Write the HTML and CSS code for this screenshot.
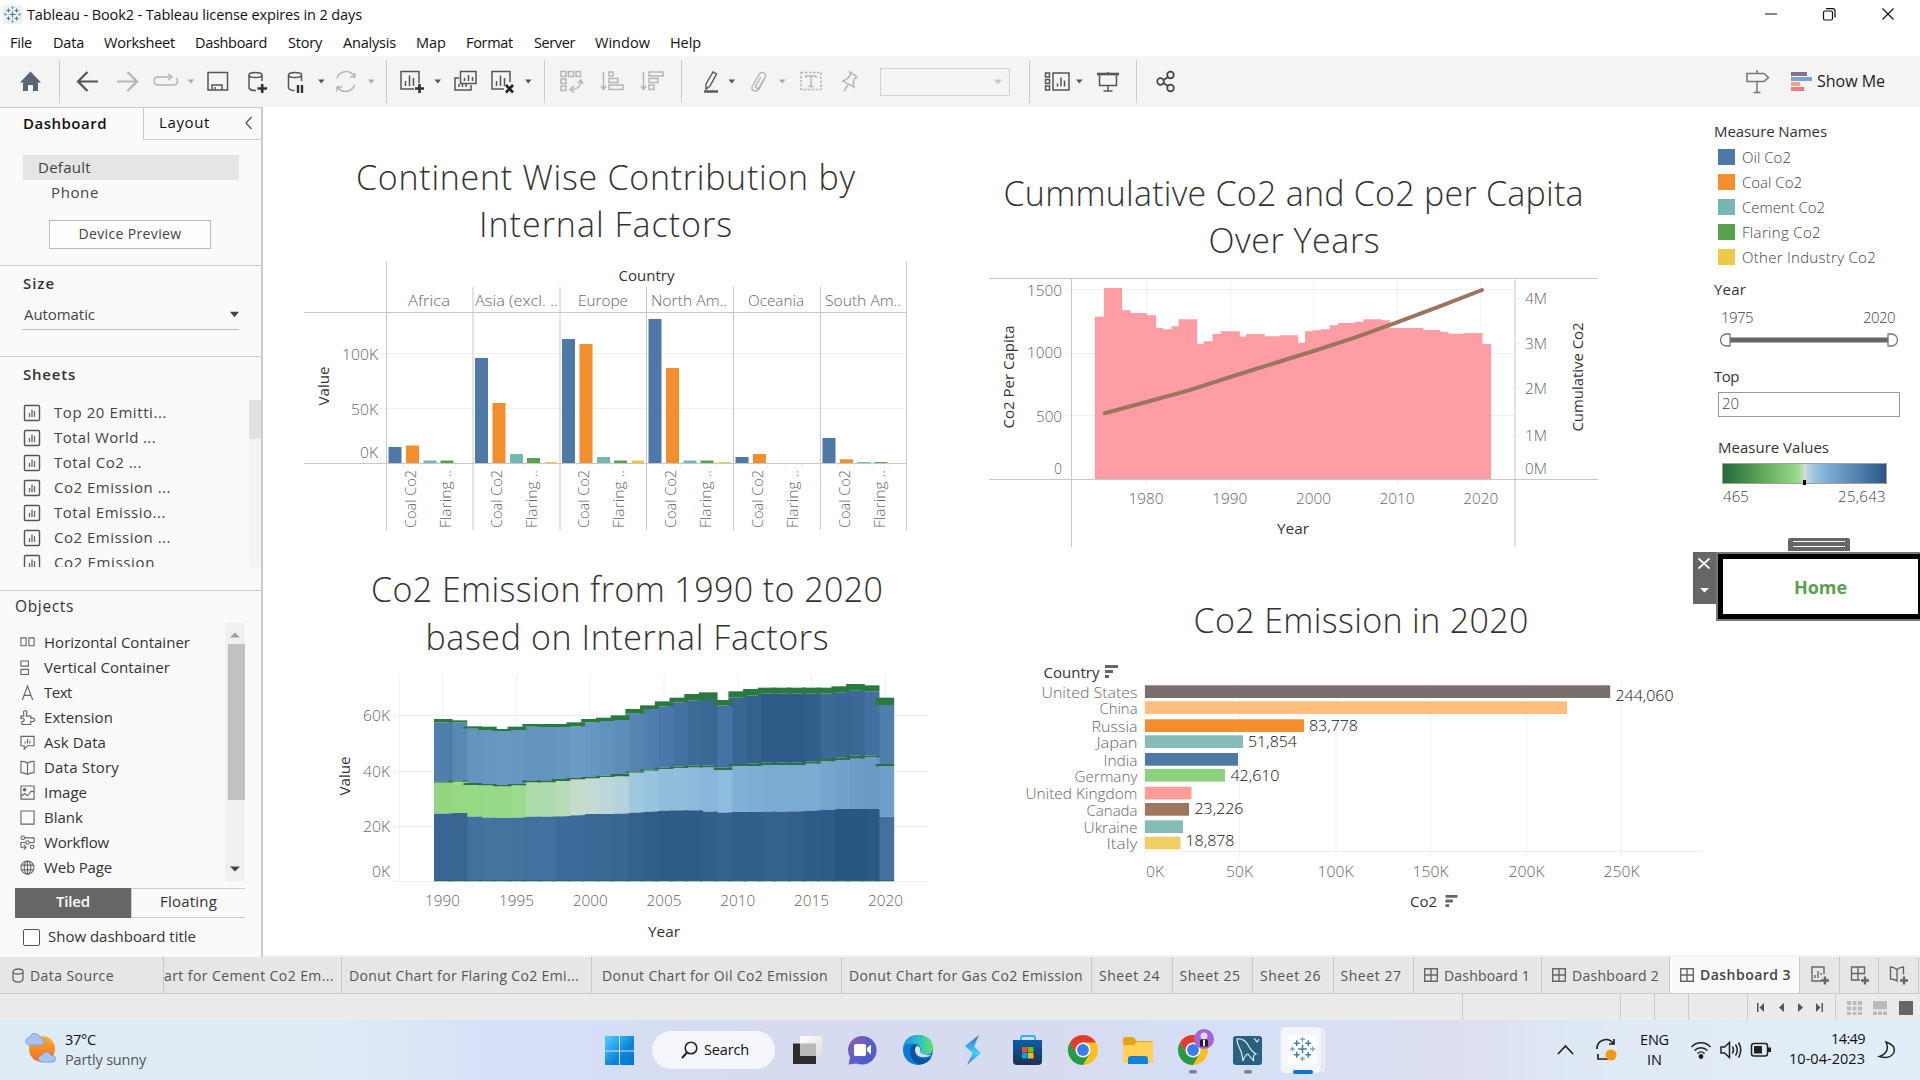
FILE: index.html
```html
<!DOCTYPE html>
<html lang="en">
<head>
<meta charset="utf-8">
<title>Tableau - Book2</title>
<link rel="stylesheet" href="styles.css">
</head>
<body>
<svg class="defs" aria-hidden="true">
  <defs>
    <symbol id="sheet" viewBox="0 0 18 18"><rect x="1.5" y="1.5" width="15" height="15" rx="1" fill="none" stroke="#555" stroke-width="1.4"/><path d="M6.5 13V9M9 13V5.500M11.500 13V7" stroke="#666" stroke-width="1.300"/></symbol>
    <symbol id="dash" viewBox="0 0 14 14"><path d="M.7.7h12.600v12.600H.7zM7 .7v12.600M.7 7h12.600" fill="none" stroke="#666" stroke-width="1.400"/></symbol>
    <symbol id="caret" viewBox="0 0 8 6"><path d="M0 .5h8L4 5.500z" fill="currentColor"/></symbol>
    <symbol id="sortmark" viewBox="0 0 13 13"><path d="M0 0h13v3H0zM0 5h8v3H0zM0 10h4v3H0z" fill="#666"/></symbol>
    <symbol id="tableau" viewBox="0 0 28 28"><path d="M14 9.500v9M9.500 14h9" stroke="#3f7cac" stroke-width="1.600"/><path d="M8 5v6M5 8h6M20 5v6M17 8h6M8 17v6M5 20h6M20 17v6M17 20h6" stroke="#3f7cac" stroke-width="1.500"/><path d="M14 1.500v5M11.500 4h5M14 21.500v5M11.500 24h5M1 14h5M3.500 11.500v5M22 14h5M24.500 11.500v5" stroke="#6ba6cf" stroke-width="1.300"/></symbol>
    <linearGradient id="win" gradientUnits="userSpaceOnUse" x1="605" y1="1036" x2="634" y2="1065"><stop offset="0" stop-color="#55d0ff"/><stop offset=".6" stop-color="#0b84dc"/><stop offset="1" stop-color="#0078d4"/></linearGradient>
    <linearGradient id="edge" x1="0" y1="0" x2="1" y2="0"><stop offset="0" stop-color="#1b8fe0"/><stop offset=".5" stop-color="#2cc0cf"/><stop offset="1" stop-color="#5fe35f"/></linearGradient>
    <linearGradient id="chat" x1="0" y1="0" x2="1" y2="1"><stop offset="0" stop-color="#9a5ca8"/><stop offset=".5" stop-color="#5b5fc7"/><stop offset="1" stop-color="#4b57c9"/></linearGradient>
    <linearGradient id="bolt" x1="0" y1="0" x2="0" y2="1"><stop offset="0" stop-color="#2d6fe8"/><stop offset=".6" stop-color="#45d0f5"/><stop offset="1" stop-color="#3a7fe8"/></linearGradient>
    <linearGradient id="store" x1="0" y1="0" x2="0" y2="1"><stop offset="0" stop-color="#0a5ea8"/><stop offset="1" stop-color="#20304f"/></linearGradient>
    <linearGradient id="glass" x1="0" y1="0" x2="1" y2="1"><stop offset="0" stop-color="#fff"/><stop offset="1" stop-color="#dedede"/></linearGradient>
    <linearGradient id="sun" x1="0" y1="0" x2="0" y2="1"><stop offset="0" stop-color="#fbb034"/><stop offset="1" stop-color="#f26a1b"/></linearGradient>
    <g id="chrome"><circle r="15" fill="#fbc11b"/><path d="M-13-7.500A15 15 0 0 0 0 15L6.500 3.750H-6.500z" fill="#269a48"/><path d="M0-7.500H13A15 15 0 0 0-13-7.500L-6.500 3.750z" fill="#e33b2e"/><circle r="7.500" fill="#fff"/><circle r="5.900" fill="#3a7df0"/></g>
  </defs>
</svg>
<div class="app">
  <header class="titlebar">
    <svg class="applogo" viewBox="0 0 28 28"><use href="#tableau"/></svg>
    <span class="seg" data-w="335">Tableau - Book2 - Tableau license expires in 2 days</span>
    <svg class="winbtns" width="150" height="28" viewBox="1758 0 150 28" fill="none" stroke="#111" stroke-width="1.200"><path d="M1765 14h12M1882.500 8.500l11 11M1893.500 8.500l-11 11"/><rect x="1823.500" y="11" width="9" height="9" rx="1.500"/><path d="M1826 8.600h6.500q2.500 0 2.500 2.500v6.400"/></svg>
  </header>
  <nav class="menubar seg"><span data-w="22">File</span><span data-w="31">Data</span><span data-w="71">Worksheet</span><span data-w="72">Dashboard</span><span data-w="34">Story</span><span data-w="53">Analysis</span><span data-w="30">Map</span><span data-w="47">Format</span><span data-w="41">Server</span><span data-w="55">Window</span><span data-w="31">Help</span></nav>
  <div class="toolbar">
    <svg width="59" height="51" viewBox="0 56 59 51"><path d="M20 82.500L30.500 71.500l10.500 11h-3v8.500h-5v-6h-5v6h-5v-8.500z" fill="#5b6573"/></svg>
    <i></i>
    <svg width="326" height="51" viewBox="60 56 326 51" fill="none" stroke="#555" stroke-width="1.500">
      <path d="M98 81.500H79M87.500 72l-9.500 9.500 9.500 9.500" stroke-width="2.200"/>
      <g stroke="#b5b5b5"><path d="M117 81.500h19M127.500 72l9.500 9.500-9.500 9.500" stroke-width="2.200"/><path d="M170 77h-12q-4 0-4 4t4 4h15q4.500 0 4.500-4 0-2-1.500-3M168 74l4 3-4 3"/><path d="M337 78a9.500 9.500 0 0 1 17-2M354.500 85a9.500 9.500 0 0 1-17 2M355 73v4h-5M337 91v-4h5"/></g>
      <path d="M208 72.500h19.500V90H208zM212 90v-5h10v5M215 90v-3"/>
      <path d="M249 75v13q2 3 7 2.500M262 75v6M249 75a6.500 2.500 0 1 0 13 0 6.500 2.500 0 1 0-13 0"/><path d="M257.500 88.500h9.500M262.200 84v9" stroke="#333" stroke-width="2.600"/>
      <path d="M288.500 75v13q1 2.500 6 2.500M301.500 75v6M288.500 75a6.500 2.500 0 1 0 13 0 6.500 2.500 0 1 0-13 0"/><path d="M298 85v8M302 85v8" stroke="#333" stroke-width="2.400"/>
      <g stroke="none"><path d="M187.500 79.500h6.500l-3.250 4z" fill="#aaa"/><path d="M318 79.500h6.500l-3.250 4z" fill="#555"/><path d="M368 79.500h6.500l-3.250 4z" fill="#aaa"/></g>
    </svg>
    <i></i>
    <svg width="157" height="51" viewBox="387 56 157 51" fill="none" stroke="#555" stroke-width="1.500">
      <path d="M419 83V71.500h-18V89h13M405.500 86v-5M409.500 86V75.500M413.500 86v-8"/><path d="M415 88.500h9M419.500 84v9" stroke="#333" stroke-width="2.600"/>
      <path d="M460.500 71.500h15.500v12h-15.500zM459 78h-4v12h16v-5M464.500 81v-3M468.500 81v-6M472.500 81v-4M459 87v-3M462.500 87v-3M466 87v-3"/>
      <path d="M510 82V71.500h-18V89h12M496.500 86v-5M500.500 86V75.500M504.500 86v-8"/><path d="M506 85l7 7.500M513 85l-7 7.500" stroke="#222" stroke-width="2.600"/>
      <g stroke="none" fill="#555"><path d="M434.500 79.500h6.500l-3.250 4z"/><path d="M525 79.500h6.500l-3.250 4z"/></g>
    </svg>
    <i></i>
    <svg width="136" height="51" viewBox="545 56 136 51" fill="none" stroke="#b5b5b5" stroke-width="1.500">
      <path d="M561 71.500h5v5h-5zM568.500 71.500h5v5h-5zM576 71.500h4.500v5H576zM561 79h5v4.500h-5zM561 86h5v4.500h-5zM571 89.500q9 0 10-8M577.500 83l3.500-3 2 4M574 86l-4 3.500 4 3"/>
      <path d="M603.500 72v17M601 86l2.500 3.500L606 86M609 72h4v4h-4zM609 78.500h9v4h-9zM609 85h14v4.500h-14z"/>
      <path d="M643.500 72v17M641 86l2.500 3.500L646 86M649 72h14v4h-14zM649 78.500h9v4h-9zM649 85h5v4.500h-5z"/>
    </svg>
    <i></i>
    <svg width="198" height="51" viewBox="682 56 198 51" fill="none" stroke="#b5b5b5" stroke-width="1.400">
      <path d="M706 84l7-12 3.500 2L710 86l-4 3z" stroke="#555"/><path d="M704 91.500h14" stroke="#555" stroke-width="2.400"/>
      <path d="M765 78l-6 11q-2.500 3-5.500 1.500T753 85l6.500-11q2-2.500 4.500-1t1 4.500l-6 10q-1 1.500-2.500.5t-.5-2.500l5-8.500"/>
      <path d="M801 72.500h20v17h-20z" stroke-dasharray="2.500 1.500"/><path d="M806 78v-2h10v2M811 76v10.500M808.500 86.500h5"/>
      <path d="M850 72l7 5-2 1-2 5 1 4-11-6 4-2 3.500-4zM848 85l-4 6"/>
      <g stroke="none"><path d="M728.500 79.500h6.500l-3.250 4z" fill="#555"/><path d="M779 79.500h6.500l-3.250 4z" fill="#aaa"/></g>
    </svg>
    <span class="combo"><svg width="8" height="6"><use href="#caret"/></svg></span>
    <i class="wide"></i>
    <svg width="106" height="51" viewBox="1030 56 106 51" fill="none" stroke="#555" stroke-width="1.500">
      <path d="M1045.500 73h4v4h-4zM1045.500 79.500h4v4h-4zM1045.500 86h4v4h-4zM1053 73h16v17h-16zM1057.500 86.500v-3M1061 86.500v-9M1064.500 86.500v-6"/><path d="M1076 79.500h6.500l-3.250 4z" fill="#555" stroke="none"/>
      <path d="M1097 74h22" stroke-width="2.600"/><path d="M1099.500 75v10.500h17V75M1108 72v2M1108 86v5M1103.500 91h9"/>
    </svg>
    <i></i>
    <svg width="60" height="51" viewBox="1137 56 60 51" fill="none" stroke="#444" stroke-width="1.700"><circle cx="1160.500" cy="81.500" r="3.300"/><circle cx="1170.500" cy="75" r="3.300"/><circle cx="1170.500" cy="88" r="3.300"/><path d="M1163.500 80l4.500-3M1163.500 83l4.500 3"/></svg>
    <div class="right">
      <svg width="72" height="51" viewBox="1741 56 72 51"><path d="M1746 73.500h17l4.500 4-4.500 4h-17zM1756 70v3M1756 82v10.500M1752.500 92.500h7" fill="none" stroke="#777" stroke-width="1.500"/><path d="M1790 72h16v4h-16z" fill="#8a6b9b"/><path d="M1790 77h21v4h-21z" fill="#7ba3cf"/><path d="M1790 82h9v4h-9z" fill="#f0a57c"/><path d="M1790 87h13v4h-13z" fill="#f77582"/></svg>
      <span data-w="68">Show Me</span>
    </div>
  </div>
  <main class="body">
    <aside class="side">
      <div class="sidetabs"><b data-w="84">Dashboard</b><span class="laytab"><span data-w="51">Layout</span><svg width="9" height="14" viewBox="0 0 9 14"><path d="M7.500 1L2 7l5.500 6" fill="none" stroke="#555" stroke-width="1.300"/></svg></span></div>
      <section class="devices">
        <div class="default"><span data-w="53">Default</span></div>
        <div class="phone"><span data-w="48">Phone</span></div>
        <div class="preview"><span data-w="103">Device Preview</span></div>
      </section>
      <section class="size"><b data-w="32">Size</b><div class="select"><span data-w="71">Automatic</span><svg width="9" height="7"><use href="#caret"/></svg></div></section>
      <section class="sheets"><b data-w="53">Sheets</b>
        <div class="sheetbox"><ul>
          <li><svg><use href="#sheet"/></svg><span data-w="113">Top 20 Emitti...</span></li>
          <li><svg><use href="#sheet"/></svg><span data-w="102">Total World ...</span></li>
          <li><svg><use href="#sheet"/></svg><span data-w="88">Total Co2 ...</span></li>
          <li><svg><use href="#sheet"/></svg><span data-w="117">Co2 Emission ...</span></li>
          <li><svg><use href="#sheet"/></svg><span data-w="112">Total Emissio...</span></li>
          <li><svg><use href="#sheet"/></svg><span data-w="117">Co2 Emission ...</span></li>
          <li><svg><use href="#sheet"/></svg><span data-w="101">Co2 Emission</span></li>
        </ul><div class="scroll"><div></div></div></div>
      </section>
      <section class="objects"><h4 data-w="59">Objects</h4>
        <div class="objbox"><ul>
          <li><svg viewBox="0 0 16 16"><path d="M1 3h5.500v8.500H1zM9.500 3H15v8.500H9.500z"/></svg><span data-w="146">Horizontal Container</span></li>
          <li><svg viewBox="0 0 16 16"><path d="M1 1h8v5.500H1zM1 10h8v5.500H1z"/></svg><span data-w="126">Vertical Container</span></li>
          <li><svg viewBox="0 0 16 16"><path d="M2.500 16L8 1l5.500 15M4.500 11h7"/></svg><span data-w="28">Text</span></li>
          <li><svg viewBox="0 0 16 16"><path d="M1 6.500h3V4q-1-3 1.500-3.200T7 4v2.500h4.500v2.500q4-1 4 1.500t-4 1.500v3.500H2V12.500q2.500 0 2.500-2T1 9z"/></svg><span data-w="69">Extension</span></li>
          <li><svg viewBox="0 0 16 16"><path d="M1 1.500h14v10H8L4.500 15v-3.500H1zM5.500 9V7M8 9V4M10.500 9V6"/></svg><span data-w="62">Ask Data</span></li>
          <li><svg viewBox="0 0 16 16"><path d="M8 3.500Q5 1 1 1.500V13.500q4 0 7 2 3-2 7-2V1.500Q11 1 8 3.500v12"/></svg><span data-w="75">Data Story</span></li>
          <li><svg viewBox="0 0 16 16"><path d="M1 1h14v14H1zM1 12l4-3 3 2.500 4-5 3 1"/><circle cx="5" cy="5" r="1.300" fill="#666"/></svg><span data-w="43">Image</span></li>
          <li><svg viewBox="0 0 16 16"><path d="M1 1h14v14H1z"/></svg><span data-w="39">Blank</span></li>
          <li><svg viewBox="0 0 16 16"><circle cx="3" cy="3" r="1.900"/><circle cx="8" cy="8" r="1.900"/><circle cx="13" cy="12.500" r="1.900"/><path d="M5 3h10v5h-5M6 8H1v5h4.500M4 10.500L6.500 13 4 15.500"/></svg><span data-w="65">Workflow</span></li>
          <li><svg viewBox="0 0 16 16"><circle cx="8" cy="8" r="7"/><ellipse cx="8" cy="8" rx="3.500" ry="7"/><path d="M1.500 5.500h13M1.500 10.500h13M8 1v14"/></svg><span data-w="68">Web Page</span></li>
        </ul><div class="scroll2"><svg width="10" height="6" viewBox="0 0 10 6"><path d="M0 5.500L5 .5l5 5z" fill="#a0a0a0"/></svg><div></div><svg width="10" height="6" viewBox="0 0 10 6"><path d="M0 .5h10L5 5.500z" fill="#444"/></svg></div></div>
        <div class="seg2"><b data-w="34">Tiled</b><span><span data-w="57">Floating</span></span></div>
        <div class="check"><i></i><span data-w="148">Show dashboard title</span></div>
      </section>
    </aside>
    <div class="canvas">
      <div class="charts">
        <svg id="c1" width="687" height="443" viewBox="263 107 687 443"></svg>
        <svg id="c2" width="740" height="443" viewBox="950 107 740 443"></svg>
        <svg id="c3" width="687" height="404" viewBox="263 550 687 404"></svg>
        <svg id="c4" width="740" height="404" viewBox="950 550 740 404"></svg>
      </div>
      <div class="legends">
        <h5 data-w="113">Measure Names</h5>
        <ul class="keys">
          <li><i class="oil"></i><span data-w="49">Oil Co2</span></li>
          <li><i class="coal"></i><span data-w="60">Coal Co2</span></li>
          <li><i class="cement"></i><span data-w="83">Cement Co2</span></li>
          <li><i class="flaring"></i><span data-w="79">Flaring Co2</span></li>
          <li><i class="other"></i><span data-w="134">Other Industry Co2</span></li>
        </ul>
        <h5 class="yr" data-w="32">Year</h5>
        <div class="range"><span data-w="32">1975</span><span data-w="32">2020</span></div>
        <svg class="slider" width="180" height="16" viewBox="0 0 180 16"><path d="M11 8h158" stroke="#666" stroke-width="5"/><path d="M11 2H7.500a6 6 0 0 0 0 12H11zM169 2h3.500a6 6 0 0 1 0 12H169z" fill="#fff" stroke="#777" stroke-width="1.300"/></svg>
        <h5 class="top" data-w="25">Top</h5>
        <div class="input"><span data-w="17">20</span></div>
        <h5 class="mv" data-w="111">Measure Values</h5>
        <div class="ramp"><i></i></div>
        <div class="ends"><span data-w="26">465</span><span data-w="48">25,643</span></div>
        <div class="grip"><i></i><i></i></div>
        <div class="zone">
          <svg width="25" height="52" viewBox="0 0 25 52"><path d="M0 0h25v52H0z" fill="#666"/><path d="M5.500 6.500l11 10M16.500 6.500l-11 10" stroke="#fff" stroke-width="1.800"/><path d="M7 36h9L11.500 40.500z" fill="#fff"/></svg>
          <div class="home"><span data-w="53">Home</span></div>
        </div>
      </div>
    </div>
  </main>
  <div class="tabs">
    <span class="ds"><svg width="12" height="15" viewBox="0 0 12 15"><path d="M1 3.500v8q1 2.500 5 2.500t5-2.500v-8M1 3.500a5 2.500 0 1 0 10 0 5 2.500 0 1 0-10 0" fill="none" stroke="#666" stroke-width="1.300"/></svg><span data-w="84">Data Source</span></span>
    <span class="cement"><span data-w="170">art for Cement Co2 Em...</span></span>
    <span class="flar"><span data-w="230">Donut Chart for Flaring Co2 Emi...</span></span>
    <span class="oilt"><span data-w="226">Donut Chart for Oil Co2 Emission</span></span>
    <span class="gas"><span data-w="234">Donut Chart for Gas Co2 Emission</span></span>
    <span class="sh"><span data-w="61">Sheet 24</span></span><span class="sh"><span data-w="61">Sheet 25</span></span><span class="sh"><span data-w="61">Sheet 26</span></span><span class="sh"><span data-w="61">Sheet 27</span></span>
    <span class="db"><svg><use href="#dash"/></svg><span data-w="86">Dashboard 1</span></span>
    <span class="db"><svg><use href="#dash"/></svg><span data-w="87">Dashboard 2</span></span>
    <span class="db on"><svg><use href="#dash"/></svg><b data-w="91">Dashboard 3</b></span>
    <span class="new"><svg viewBox="0 0 20 20"><path d="M14 9V2H2v14h9M5 13v-3M8 13V6M11 10V8"/><path class="plus" d="M11 15.500h8M15 11.500v8"/></svg></span>
    <span class="new"><svg viewBox="0 0 20 20"><path d="M14.500 9.500V2h-13v13H10M8 2v13M1.500 8.500h13"/><path class="plus" d="M11 15.500h8M15 11.500v8"/></svg></span>
    <span class="new"><svg viewBox="0 0 20 20"><path d="M8 4.500Q5 2 1.500 2v12q4 0 6.500 2V4.500Q11 2 14.500 2v7.500"/><path class="plus" d="M11 15.500h8M15 11.500v8"/></svg></span>
  </div>
  <div class="status"><svg width="460" height="26" viewBox="1460 994 460 26"><path d="M1462.500 994v26M1620.500 994v26M1654.500 994v26M1688.500 994v26M1747.500 994v26M1835.500 994v26" stroke="#ccc"/><path d="M1757 1003h1.500v9h-1.500zM1764 1003v9l-4.500-4.500zM1784 1003v9l-5-4.500zM1798 1003v9l5-4.500zM1816 1003v9l4.500-4.500zM1821.500 1003h1.500v9h-1.500z" fill="#555"/><path d="M1847 1001h4v4h-4zM1852.500 1001h4v4h-4zM1858 1001h4v4h-4zM1847 1006.500h4v4h-4zM1852.500 1006.500h4v4h-4zM1858 1006.500h4v4h-4zM1847 1012h4v3h-4zM1852.500 1012h4v3h-4zM1858 1012h4v3h-4zM1873 1001h14v8.500h-14zM1873 1011.500h4v3.500h-4zM1878 1011.500h4v3.500h-4zM1883 1011.500h4v3.500h-4z" fill="#bbb"/><path d="M1899 1001h14v14h-14z" fill="#666"/></svg></div>
  <footer class="taskbar seg">
    <svg width="38" height="60" viewBox="22 1020 38 60"><circle cx="42" cy="1049" r="13" fill="url(#sun)"/><path d="M29 1045q-4-1-3-4.500t4-3.500q1-4 5-3.500t5 4q4 0 4 4t-4 3.500zM41 1062q-3-1-2.500-4t4-3q1-3 4-3t4 3.500q5-.5 5 3.500 0 3-4 3z" fill="#a9c4ee" stroke="#7f9fd8"/></svg>
    <div class="weather"><span data-w="31">37°C</span><em data-w="81">Partly sunny</em></div>
    <svg class="start" width="30" height="60" viewBox="605 1020 30 60"><path d="M605 1036h14v14.500h-14zM620 1036h14v14.500h-14zM605 1051.500h14v13.500h-14zM620 1051.500h14v13.500h-14z" fill="url(#win)"/></svg>
    <div class="search"><svg width="18" height="18" viewBox="0 0 18 18"><circle cx="11" cy="7" r="5.800" fill="none" stroke="#222" stroke-width="1.600"/><path d="M7 11.500L2 17" stroke="#222" stroke-width="2"/></svg><span data-w="45">Search</span></div>
    <svg width="560" height="60" viewBox="780 1020 560 60">
      <path d="M793 1043.500h23v20.500h-23z" fill="#2d2d2d"/><path d="M800 1036h22.500v20h-22.500z" fill="url(#glass)"/><path d="M800 1043.500h16v12.500h-16z" fill="#b9b9b9"/>
      <path d="M848.500 1064.500l1.500-7q-2-4-2-7a14.300 14.300 0 1 1 14.300 14q-4 0-6-1z" fill="url(#chat)"/><rect x="854" y="1044" width="12" height="12" rx="1.500" fill="#fff"/><path d="M867 1048l4-3.500v10l-4-3.500z" fill="#fff"/>
      <circle cx="918" cy="1050" r="15" fill="#0f7ad4"/><path d="M903.200 1047.500Q905 1035 918 1035q14.500.5 15 13 0 7-8 7-5 0-4.500-3.500 1.500-7.500-6.500-8-7-.5-10.800 4z" fill="url(#edge)"/><path d="M911 1047q-3 14 9 17.500 8-1 11.500-7.500-6 3-11.500 1-5.500-2.500-5-9 1-3 3-4-5-2-7 2z" fill="#0f52a0"/><path d="M917 1045.500q-4 4 0 9.500 6 4.500 14.500 0-11 1-11.500-4.500 1-3-3-5z" fill="#d8e0f6"/>
      <path d="M979 1035l-14 11 7.500 7-5.500 12 14-12-7-6.500z" fill="url(#bolt)"/>
      <path d="M1021 1041v-3q0-2 2-2h10q2 0 2 2v3" fill="none" stroke="#2ab4ea" stroke-width="1.800"/><path d="M1013 1040h29v21q0 4-4 4h-21q-4 0-4-4z" fill="url(#store)"/><path d="M1022 1047h5.500v5.500h-5.500z" fill="#f25022"/><path d="M1028 1047h5.500v5.500h-5.500z" fill="#7fba00"/><path d="M1022 1053h5.500v5.500h-5.500z" fill="#00a4ef"/><path d="M1028 1053h5.500v5.500h-5.500z" fill="#ffb900"/>
      <use href="#chrome" x="1083" y="1050"/>
      <path d="M1123 1039q0-2 2-2h8l4 4h14q2 0 2 2v18q0 2-2 2h-26q-2 0-2-2z" fill="#e8a317"/><path d="M1123 1045h11l3-3h16v19q0 2-2 2h-26q-2 0-2-2z" fill="#ffd257"/><path d="M1128 1064v-5q0-3 3-3h14q3 0 3 3v5z" fill="#1680d8"/>
      <use href="#chrome" x="1193" y="1050"/><circle cx="1204" cy="1039" r="10" fill="#a463d8"/><path d="M1200 1046.500v-6q4-4 8 0v6z" fill="#222"/><path d="M1203 1040h2v6h-2z" fill="#eee"/><circle cx="1204" cy="1036" r="3.500" fill="#ddd"/>
      <rect x="1233" y="1036" width="29" height="29" rx="3" fill="#28627f"/><path d="M1237 1039q7-1 11 6 3 6 8 9-4 1-2 7-4-4-6-7-3 1-5 7-1-8-3-12-3-6-3-10zM1254 1038l3 4 2-3" fill="none" stroke="#dfeaf0" stroke-width="1.200"/>
      <rect x="1284" y="1026.500" width="42" height="47" rx="5" fill="#e9eef9" stroke="#d5dbe8"/><rect x="1280" y="1026.500" width="42" height="47" rx="5" fill="#f3f6fc" stroke="#d5dbe8"/><path d="M1288.500 1035h28v28.500h-28z" fill="#fff"/><use href="#tableau" x="1289" y="1035.500" width="27" height="27"/>
      <rect x="1293" y="1070" width="20" height="4" rx="2" fill="#0e72d0"/><rect x="1189" y="1070" width="8" height="3.500" rx="1.700" fill="#7c8290"/><rect x="1244" y="1070" width="8" height="3.500" rx="1.700" fill="#7c8290"/>
    </svg>
    <div class="tray">
      <svg width="76" height="60" viewBox="1550 1020 76 60" fill="none" stroke="#222" stroke-width="1.700"><path d="M1558 1054l7.500-8 7.500 8M1597 1049a9 9 0 0 1 16-6M1614 1039v5h-5M1608 1059h-9M1598 1054v5h5"/><circle cx="1611" cy="1055" r="5.500" fill="#f39a12" stroke="none"/></svg>
      <div class="lang"><span data-w="29">ENG</span><span data-w="15">IN</span></div>
      <svg width="92" height="60" viewBox="1684 1020 92 60" fill="none" stroke="#222" stroke-width="1.500"><path d="M1691.500 1047a13 13 0 0 1 19 0M1694.500 1050.500a9 9 0 0 1 13 0M1697.500 1053.500a5 5 0 0 1 7 0M1721 1047h3.500l5-4.500v15l-5-4.500h-3.500zM1732.500 1046.500q2 3.500 0 7M1735.500 1044.500q3.500 5.500 0 11M1738.500 1042.500q4.500 7.500 0 15"/><circle cx="1701" cy="1056.500" r="1.700" fill="#222"/><rect x="1751.500" y="1043.500" width="16" height="12.500" rx="2.500"/><path d="M1754 1046h8v7.500h-8zM1768 1047.500h3v4.500h-3z" fill="#222" stroke="none"/></svg>
      <div class="clock"><span data-w="34">14:49</span><span data-w="76">10-04-2023</span></div>
      <svg width="30" height="60" viewBox="1872 1020 30 60"><path d="M1886 1042q10 3 8 10.500-4 7-14.500 4 11-4 6.500-14.500z" fill="none" stroke="#222" stroke-width="1.500"/></svg>
    </div>
  </footer>
</div>
<script src="charts.js"></script>
</body>
</html>
```
FILE: styles.css
```css
* { box-sizing: border-box; }
body { margin: 0; font-family: "Open Sans", "Noto Sans", sans-serif; font-size: 15px; color: #333; background: #fff; }
ul { list-style: none; margin: 0; padding: 0; }
svg { display: block; flex: none; }
.defs { position: absolute; width: 0; height: 0; }
[data-w] { white-space: nowrap; }
.app { width: 1920px; height: 1080px; display: flex; flex-direction: column; overflow: hidden; }
.seg { font-family: "Open Sans", "Noto Sans", sans-serif; color: #111; }

.titlebar { height: 28px; display: flex; align-items: center; padding-left: 3px; font-size: 14.5px; }
.applogo { width: 19px; height: 19px; background: #eef0f2; margin-right: 5px; }
.winbtns { margin-left: auto; margin-right: 12px; }
.menubar { height: 28px; padding-left: 10px; display: grid; align-items: center; grid-template-columns: 43px 51px 91px 93px 55px 73px 50px 68px 61px 75px 60px; font-size: 14.5px; line-height: 30px; }
.menubar span { justify-self: start; }

.toolbar { height: 51px; background: #f4f4f4; display: flex; align-items: center; }
.toolbar > i { width: 1px; height: 43px; background: #ccc; }
.toolbar > i.wide { margin-left: 19px; }
.combo { width: 130px; height: 28px; border: 1px solid #d2d2d2; display: flex; align-items: center; justify-content: flex-end; padding-right: 7px; color: #c8c8c8; }
.toolbar .right { margin-left: auto; display: flex; align-items: center; gap: 3px; padding-right: 35px; color: #222; font-size: 16px; }
.toolbar .right span { padding-bottom: 2px; }

.body { height: 850px; display: flex; }
.side { width: 263px; border-right: 2px solid #ccc; border-top: 1px solid #ccc; background: #fafafa; flex: none; display: flex; flex-direction: column; }
.sidetabs { display: flex; height: 32px; padding-left: 23px; align-items: center; color: #111; line-height: 20px; }
.sidetabs b, .laytab span { padding-bottom: 2px; }
.laytab { margin-left: auto; width: 118px; height: 32px; border-left: 1px solid #ccc; border-bottom: 1px solid #ccc; padding: 0 8px 2px 15px; display: flex; align-items: center; justify-content: space-between; }
.side b { font-weight: 600; }
.devices { padding: 15px 22px 0 23px; height: 125px; color: #444; line-height: 25px; }
.default { background: #e5e5e5; height: 25px; padding-left: 15px; width: 216px; }
.phone { padding-left: 28px; height: 25px; }
.preview { margin: 15px 0 0 26px; width: 162px; height: 29px; line-height: 25px; border: 1px solid #bbb; background: #fdfdfd; text-align: center; font-size: 14px; }
.size { border-top: 1px solid #ccc; height: 91px; padding: 7px 0 0 23px; }
.size b, .sheets b { line-height: 21px; display: inline-block; }
.select { width: 216px; height: 29px; margin-top: 7px; padding: 0 0 2px 1px; border-bottom: 1px solid #bbb; display: flex; align-items: center; justify-content: space-between; color: #444; }
.sheets { border-top: 1px solid #ccc; height: 234px; padding: 7px 0 0 23px; }
.sheetbox { margin-top: 15px; height: 167px; overflow: hidden; display: flex; justify-content: space-between; }
.sheets li { display: flex; align-items: center; height: 25px; gap: 13px; color: #444; line-height: 20px; }
.sheets li span { padding-bottom: 1px; }
.sheets li svg { width: 18px; height: 18px; }
.scroll { width: 12px; background: #f3f3f3; }
.scroll div { height: 39px; background: #e0e0e0; }
.objects { border-top: 1px solid #ccc; padding: 3px 0 0 15px; flex: 1; }
.objects h4 { margin: 0; font-weight: 500; font-size: 15.5px; line-height: 24px; width: max-content; }
.objbox { display: flex; justify-content: space-between; width: 230px; margin-top: 5px; height: 258px; }
.objbox ul { padding: 7px 0 0 5px; }
.objbox li { display: flex; align-items: center; height: 25px; gap: 9px; line-height: 20px; }
.objbox li span { padding-bottom: 2px; }
.objbox li svg { width: 15px; height: 15px; fill: none; stroke: #666; stroke-width: 1.2; }
.scroll2 { width: 20px; background: #f0f0f0; display: flex; flex-direction: column; align-items: center; padding: 9px 0; }
.scroll2 div { width: 17px; height: 156px; background: #c1c1c1; margin: 6px 0 auto 3px; }
.seg2 { display: grid; grid-template-columns: 116px 114px; height: 30px; line-height: 26px; text-align: center; margin-top: 7px; }
.seg2 b { background: #666; color: #fff; }
.seg2 > span { border: 1px solid #ccc; border-right: 0; line-height: 24px; }
.check { display: flex; gap: 8px; align-items: center; height: 17px; margin: 11px 0 0 8px; line-height: 20px; }
.check span { padding-bottom: 3px; }
.check i { width: 17px; height: 17px; border: 1px solid #555; border-radius: 2px; background: #fff; }

.canvas { flex: 1; display: flex; border-bottom: 2px solid #f3f3f3; }
.charts { display: grid; grid-template-columns: 687px 740px; grid-template-rows: 443px 404px; flex: none; width: 1427px; margin-right: -2px; }
.charts svg { overflow: visible; }
.charts text { font-family: "Open Sans", "Noto Sans", sans-serif; font-size: 15px; font-weight: 350; fill: #666; }
.charts .title { font-size: 34px; font-weight: 320; fill: #333; }
.charts .axis { fill: #333; font-weight: 400; }
.charts .val { fill: #111; }
.charts .grid { stroke: #f0f0f0; fill: none; }
.charts .rule { stroke: #c8c8c8; fill: none; }
.legends { width: 232px; flex: none; padding-top: 14px; font-size: 15px; font-weight: 350; color: #444; }
.legends h5 { margin: 0 0 0 26px; line-height: 20px; font-size: 15px; font-weight: 450; color: #333; width: max-content; }
.keys { padding-left: 30px; margin-top: 3px; }
.keys li { display: flex; gap: 7px; align-items: center; height: 25px; line-height: 20px; }
.keys i { width: 17px; height: 16px; }
.keys .oil { background: #4e79a7; }
.keys .coal { background: #f28e2b; }
.keys .cement { background: #76b7b2; }
.keys .flaring { background: #59a14f; }
.keys .other { background: #edc948; }
.legends .yr { margin-top: 10px; }
.range { display: flex; justify-content: space-between; margin: 8px 25px 0 33px; line-height: 20px; }
.slider { margin: 5px 0 0 31px; }
.legends .top { margin-top: 18px; }
.input { margin: 6px 0 0 30px; width: 182px; height: 25px; border: 1px solid #999; padding-left: 3px; line-height: 20px; }
.legends .mv { margin: 20px 0 0 30px; }
.ramp { margin: 6px 0 0 34px; width: 165px; height: 21px; border: 1px solid #a89f8e; background: linear-gradient(90deg, #24693d, #5aa354 22%, #98d98a 46%, #d0dbd5 50%, #9ec9e2 55%, #7ba9d2 65%, #4a7cac 85%, #2a5783); display: flex; }
.ramp i { width: 3px; height: 5px; background: #000; margin: 16px auto -2px; }
.ends { display: flex; justify-content: space-between; margin: 2px 34px 0 35px; line-height: 20px; }
.grip { margin: 32px 0 0 100px; width: 62px; height: 13px; background: #666; border-radius: 2px 2px 0 0; padding: 3px 5px; display: flex; flex-direction: column; gap: 4px; }
.grip i { height: 1px; background: #fff; }
.zone { display: flex; margin-left: 5px; height: 72px; align-items: flex-start; padding-top: 1px; }
.home { margin: 2px 0 0; width: 202px; height: 65px; border: 5px solid #000; border-right-width: 2px; outline: 2px solid #777; display: flex; align-items: center; justify-content: center; font-size: 18px; font-weight: 700; line-height: 24px; color: #59a14f; background: #fff; }

.tabs { height: 37px; background: #e6e6e6; display: flex; font-size: 14px; color: #555; border-bottom: 1px solid #ccc; }
.tabs > span { border-right: 1px solid #c8c8c8; display: flex; align-items: center; padding-left: 7px; height: 36px; flex: none; overflow: hidden; }
.tabs .ds { width: 164px; padding-left: 12px; gap: 6px; }
.tabs .cement { width: 178px; padding-left: 0; }
.tabs .flar { width: 250px; }
.tabs .oilt { width: 250px; padding-left: 10px; }
.tabs .gas { width: 250px; }
.tabs .sh { width: 80.500px; }
.tabs .db { width: 128px; padding-left: 10px; gap: 6px; }
.tabs .db svg { width: 14px; height: 14px; }
.tabs .on { background: #fafafa; width: 130px; color: #444; }
.tabs .on b { font-weight: 600; padding-bottom: 2px; }
.tabs .new { width: 39.500px; padding-left: 10px; }
.tabs .new svg { width: 20px; height: 20px; fill: none; stroke: #666; stroke-width: 1.4; }
.tabs .new .plus { stroke-width: 2.4; }
.status { height: 26px; background: #ebebeb; display: flex; justify-content: flex-end; }
.taskbar { height: 60px; background: linear-gradient(90deg, #dfecf5 0, #dfecf6 17%, #d5e0f8 26%, #d6dbef 40%, #d6dcf0 55%, #d5dff6 65%, #dcdff0 76%, #dfeaf5 84%, #e2eef7 100%); display: flex; align-items: center; padding-left: 22px; font-size: 14.5px; line-height: 20px; }
.weather { width: 545px; display: flex; flex-direction: column; align-items: flex-start; padding-left: 5px; }
.weather em { font-style: normal; color: #555; }
.search { margin: 0 5px 0 17px; width: 123px; height: 38px; border-radius: 19px; background: #f4f6fc; display: flex; align-items: center; gap: 6px; padding-left: 28px; }
.tray { margin-left: auto; display: flex; align-items: center; padding-right: 18px; }
.lang { width: 58px; display: flex; flex-direction: column; align-items: center; padding-right: 1px; }
.clock { width: 96px; display: flex; flex-direction: column; align-items: flex-end; padding: 0 7px 2px 0; }
```
FILE: charts.js
```js
const NS = 'http://www.w3.org/2000/svg';
function el(parent, name, attrs, text) {
  const e = document.createElementNS(NS, name);
  for (const k in attrs) e.setAttribute(k, attrs[k]);
  if (text) e.textContent = text;
  parent.appendChild(e);
  return e;
}
const svg = id => document.getElementById(id);
// cy is the middle of the capitals
function label(s, text, x, cy, w, anchor = 'middle', cls = '') {
  const h = cls === 'title' ? 11 : 5;
  el(s, 'text', { x, y: cy + h, 'text-anchor': anchor, textLength: w, lengthAdjust: cls === 'title' ? 'spacing' : 'spacingAndGlyphs', class: cls }, text);
}
function vlabel(s, text, cx, cy, w, cls = '') {
  el(s, 'text', { x: 0, y: 4.5, 'text-anchor': 'middle', textLength: w, lengthAdjust: 'spacingAndGlyphs', class: cls, transform: `translate(${cx} ${cy}) rotate(-90)` }, text);
}
const line = (s, d, cls) => el(s, 'path', { d, class: cls });
const rect = (s, x, y, w, h, fill) => el(s, 'rect', { x, y, width: w, height: h, fill });

// Continent wise contribution
{
  const s = svg('c1');
  label(s, 'Continent Wise Contribution by', 605.500, 178.500, 499, 'middle', 'title');
  label(s, 'Internal Factors', 605.500, 225.500, 253, 'middle', 'title');
  line(s, 'M380 353.500H906M380 408.500H906', 'grid');
  const base = 463.500;
  const colors = ['#4e79a7', '#f28e2b', '#76b7b2', '#59a14f', '#edc948'];
  const off = [2, 19.500, 37, 54, 72];
  const cells = [
    ['Africa', 386.500, 429, 42, [447, 445.500, 460.500, 460.500]],
    ['Asia (excl. ..', 473, 516.500, 83, [358, 403, 454, 458, 462]],
    ['Europe', 560, 603, 50, [339, 344, 457, 460.500, 460.500]],
    ['North Am..', 646.500, 689, 76, [319, 368, 460.500, 460.500, 462]],
    ['Oceania', 733.500, 776, 56, [457, 454]],
    ['South Am..', 820.500, 863, 76, [438, 459.300, 462, 462]]
  ];
  for (const [name, x, cx, w, tops] of cells) {
    label(s, name, cx, 301, w);
    tops.forEach((t, i) => rect(s, x + off[i], t, i === 4 ? 12 : 13, base - t, colors[i]));
    line(s, `M${x} ${x < 400 ? 262 : 287}V530`, 'rule');
    vlabel(s, 'Coal Co2', x + 24.500, 499, 58);
    vlabel(s, 'Flaring ..', x + 59.500, 499, 58);
    line(s, `M${x + 17} 464v4M${x + 34} 464v4M${x + 51.500} 464v4M${x + 69} 464v4`, 'grid');
  }
  line(s, 'M906.500 262V530M304 312.500H906M304 463.500H906', 'rule');
  label(s, 'Country', 646.500, 275.500, 56, 'middle', 'axis');
  label(s, '100K', 378, 354.700, 36, 'end');
  label(s, '50K', 378, 409.700, 27, 'end');
  label(s, '0K', 378, 452.700, 18, 'end');
  vlabel(s, 'Value', 324.500, 386, 39, 'axis');
}

// Cumulative and per capita
{
  const s = svg('c2');
  label(s, 'Cummulative Co2 and Co2 per Capita', 1293.500, 194.500, 580, 'middle', 'title');
  label(s, 'Over Years', 1294, 241.500, 171, 'middle', 'title');
  line(s, 'M1066 289.500H1515M1066 353.500H1515M1066 415.500H1515M1146.500 279V484M1230.500 279V484M1314 279V484M1397.500 279V484M1481 279V484M1515 298.500h5M1515 343.500h5M1515 388.500h5M1515 435.500h5', 'grid');
  const steps = [[301, 170], [323, 84], [367, 151], [388, 159], [427, 166], [449, 204], [466, 208], [486, 199], [503, 178], [548, 252], [563, 244], [585, 222], [605, 214], [651, 230], [666, 222], [711, 229], [747, 226], [792, 248], [808, 214], [827, 211], [847, 208], [868, 196], [888, 189], [928, 185], [949, 178], [994, 181], [1013, 204], [1094, 210], [1135, 215], [1154, 221], [1191, 219], [1236, 252]];
  const X = v => (970 + v / 2.4123).toFixed(1), Y = v => (260 + v / 3).toFixed(1);
  let d = `M${X(301)} 479`;
  for (const [x, y] of steps) d += `H${X(x)}V${Y(y)}`;
  el(s, 'path', { d: d + `H${X(1257)}V479z`, fill: '#ff9da5' });
  const pts = [[325, 460], [425, 426], [526, 392], [628, 351], [728, 312], [829, 273], [930, 232], [1030, 187], [1133, 139], [1235, 90]];
  el(s, 'polyline', { points: pts.map(p => X(p[0]) + ',' + Y(p[1])).join(' '), fill: 'none', stroke: '#9c755f', 'stroke-width': 4, 'stroke-linecap': 'round' });
  line(s, 'M989 278.500H1598M989 479.500H1598M1071.500 278V547M1515 278V547', 'rule');
  label(s, '1500', 1062, 290.700, 35, 'end');
  label(s, '1000', 1062, 353.300, 35, 'end');
  label(s, '500', 1062, 416.500, 26, 'end');
  label(s, '0', 1062, 468.700, 8, 'end');
  ['4M', '3M', '2M', '1M', '0M'].forEach((t, i) => label(s, t, 1525, [298.500, 343.500, 388.500, 435.500, 468.700][i], 22, 'start'));
  [1980, 1990, 2000, 2010, 2020].forEach((t, i) => label(s, String(t), 1146 + i * 83.700, 498.500, 35));
  label(s, 'Year', 1293, 528.500, 32, 'middle', 'axis');
  vlabel(s, 'Co2 Per Capita', 1009, 377, 103, 'axis');
  vlabel(s, 'Cumulative Co2', 1578.500, 377, 109, 'axis');
}

// Emission 1990 - 2020
{
  const s = svg('c3');
  label(s, 'Co2 Emission from 1990 to 2020', 627, 590.500, 512, 'middle', 'title');
  label(s, 'based on Internal Factors', 627, 638.500, 403, 'middle', 'title');
  line(s, 'M393 715.500H929M393 771.500H929M393 826.500H929M393 881.500H929M399.500 674V882', 'grid');
  for (let i = 0; i < 7; i++) {
    const x = 442.600 + i * 73.800;
    line(s, `M${x} 674V887`, 'grid');
    label(s, String(1990 + i * 5), x, 901.300, 35);
  }
  const rows = [
    [177, 187, 364, 368, 461], [181, 187, 361, 364, 459], [199, 206, 369, 375, 470], [200, 210, 372, 376, 473],
    [207, 213, 374, 379, 474], [200, 210, 372, 376, 473], [192, 200, 361, 367, 470], [192, 201, 361, 367, 470],
    [192, 201, 357, 363, 469], [187, 199, 354, 357, 466], [177, 187, 351, 354, 462], [173, 183, 347, 350, 462],
    [166, 180, 342, 349, 461], [147, 161, 334, 338, 458], [136, 147, 328, 331, 455], [124, 139, 323, 326, 452],
    [113, 127, 320, 323, 451], [102, 121, 317, 322, 451], [97, 117, 317, 322, 455], [120, 136, 323, 330, 458],
    [94, 112, 312, 318, 456], [87, 106, 311, 318, 456], [83, 101, 308, 315, 455], [83, 101, 308, 315, 455],
    [83, 101, 308, 315, 454], [83, 101, 305, 311, 452], [83, 101, 297, 304, 450], [79, 97, 293, 300, 447],
    [72, 91, 287, 296, 447], [76, 94, 287, 292, 447], [113, 135, 312, 319, 470]];
  const upper = '4f80ad 5888b4 6595bf 6697c1 6798c3 6697c1 6394be 6394be 6697c1 6a9cc6 6697c1 6293bd 5e8fba 5586b3 4f80ad 4a78a8 44709f 3e6a98 3c6896 4673a2 3a6695 35618f 2f5b88 2f5b88 2f5b88 325e8b 3d6997 3a6694 3c6896 44709f 4f80ad'.split(' ');
  const light = '93d580 96d884 96d884 98d988 98d988 9bdb8c afdcac afdcac b8dcb8 c4dccb c3d9d3 bcd5d9 b4d2dc 9fc8de 98c4de 92bedb 92bedb 8dbadb 88b5d9 8fbcdd 80b0d7 7daed5 7aabd3 7aabd3 7aabd3 7aabd3 74a6cf 70a2cc 6c9cc7 6a9ac5 6d9fca'.split(' ');
  const dark = '3a6694 3a6694 42709f 45739f 45739f 44729f 42709f 42709f 3e6b99 3e6b99 3d6997 3c6896 3a6694 35618f 325e8b 2f5b88 2f5b88 2f5b88 325e8b 35618f 325e8b 325e8b 35618f 35618f 345f8d 305c89 2f5b88 2a5683 2a5683 2c5885 42709f'.split(' ');
  const Y = v => 660 + v / 3, left = i => 434 + i * 14.720, W = 18.600;
  for (let i = 30; i >= 0; i--) {
    const [, b, m, l, k] = rows[i];
    rect(s, left(i), Y(b), W, Y(m) - Y(b), '#' + upper[i]);
    rect(s, left(i), Y(l), W, Y(k) - Y(l), '#' + light[i]);
    rect(s, left(i), Y(k), W, 881.300 - Y(k), '#' + dark[i]);
  }
  for (let i = 30; i >= 0; i--) {
    const [t, b, m, l] = rows[i];
    rect(s, left(i), Y(t), W, Y(b) - Y(t), '#2a7a40');
    rect(s, left(i), Y(m), W, Math.max(1.300, Y(l) - Y(m)), '#2a7148');
  }
  rect(s, 434, 880, 460, 1, '#2d6a62');
  label(s, '60K', 390, 716.300, 27, 'end');
  label(s, '40K', 390, 772.300, 27, 'end');
  label(s, '20K', 390, 827.300, 27, 'end');
  label(s, '0K', 390, 871.700, 18, 'end');
  label(s, 'Year', 664, 931.700, 32, 'middle', 'axis');
  vlabel(s, 'Value', 345, 776, 39, 'axis');
}

// Emission in 2020
{
  const s = svg('c4');
  label(s, 'Co2 Emission in 2020', 1361, 621.500, 335, 'middle', 'title');
  line(s, 'M1144.500 683V857M1239.500 683V857M1336 683V857M1430.500 683V857M1526.500 683V857M1621.500 683V857M1144 851.500H1703', 'grid');
  const bars = [
    ['United States', 96, 685.300, 1610.200, '#79706e', 693], ['China', 38, 701.300, 1567, '#ffbe7d', 708.700],
    ['Russia', 46, 719.300, 1304, '#f28e2b', 727], ['Japan', 41, 735.300, 1243, '#86bcb6', 743],
    ['India', 34, 753, 1238, '#4e79a7', 760.700], ['Germany', 63, 769, 1225, '#8cd17d', 777],
    ['United Kingdom', 112, 786.700, 1191.500, '#ff9d9a', 794], ['Canada', 51, 803, 1189, '#9d7660', 810.700],
    ['Ukraine', 54, 820.300, 1183, '#86bcb6', 827.700], ['Italy', 31, 836.700, 1180.500, '#f1ce63', 844]];
  for (const [n, w, y, x2, c, cy] of bars) {
    rect(s, 1145, y, x2 - 1145, 12.700, c);
    label(s, n, 1137.500, cy, w, 'end');
  }
  [['244,060', 1615.500, 696.300, 58], ['83,778', 1309, 726, 49], ['51,854', 1248, 742, 49], ['42,610', 1230.500, 776, 49], ['23,226', 1194.500, 809, 49], ['18,878', 1185.500, 841, 49]]
    .forEach(v => label(s, v[0], v[1], v[2], v[3], 'start', 'val'));
  [['0K', 1155, 18], ['50K', 1239.500, 27], ['100K', 1335.500, 36], ['150K', 1430.500, 36], ['200K', 1526.500, 36], ['250K', 1621.500, 36]]
    .forEach(v => label(s, v[0], v[1], 871.700, v[2]));
  label(s, 'Country', 1043.500, 673, 56, 'start', 'axis');
  label(s, 'Co2', 1410, 901.700, 27, 'start', 'axis');
  el(s, 'use', { href: '#sortmark', x: 1105, y: 665, width: 13, height: 13 });
  el(s, 'use', { href: '#sortmark', x: 1445, y: 895, width: 13, height: 12 });
}

// Track each interface string to its nominal width
document.querySelectorAll('[data-w]').forEach(e => {
  const r = document.createRange();
  r.selectNodeContents(e);
  const n = e.textContent.length;
  e.style.letterSpacing = ((e.dataset.w - r.getBoundingClientRect().width) / n).toFixed(3) + 'px';
});
```
